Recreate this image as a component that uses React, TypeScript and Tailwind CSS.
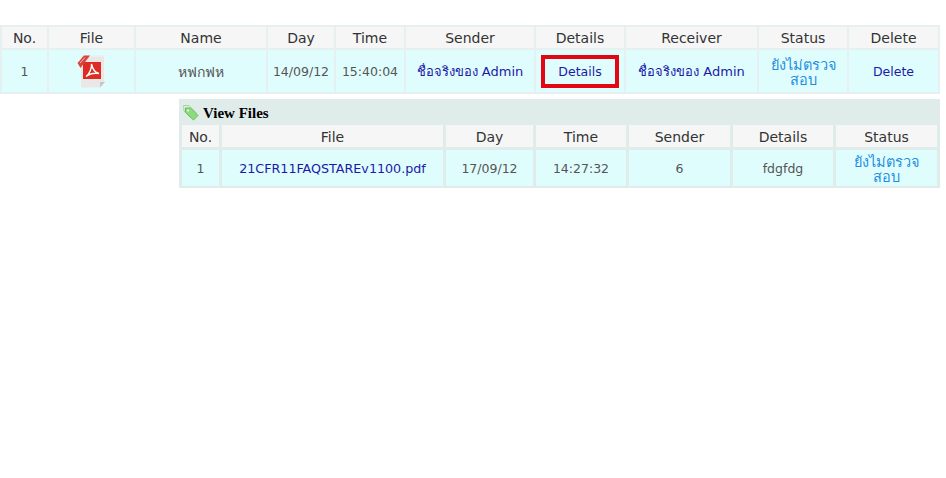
const Th = ({ c, className = "h-[21px] pt-[1px] leading-[20px]" }: { c: string; className?: string }) => (
  <th className={`bg-[#f6f6f6] px-0 pb-0 text-center font-normal text-[14px] text-[#333333] ${className}`}>{c}</th>
);
const Td = ({ children, className = "pt-[2px] text-[#555555] text-[12.500px]" }: { children?: React.ReactNode; className?: string }) => (
  <td className={`bg-[#e0fdfe] px-0 pb-0 text-center align-middle leading-[14px] ${className}`}>{children}</td>
);
const PdfIcon = () => (
  <svg width="30" height="33" viewBox="0 0 30 33" className="mx-auto block">
    <path d="M4 0.500 H28 V27 L23 32.500 H4 Z" fill="#eae7e7" />
    <path d="M28 27 L23 32.500 V27 Z" fill="#c8c4c4" />
    <path d="M4 0.500 H28 V27 H27 V1.500 H4 Z" fill="#f4f2f2" />
    <rect x="6" y="7" width="18" height="17" fill="#dc2c24" />
    <path d="M9 21.500 C12.500 19 15 13 14.500 9 C15.500 14 18 17.500 22 18.500 C17.500 17.800 12.500 18.800 9 21.500 Z" fill="none" stroke="#ffffff" strokeWidth="1.400" />
    <path d="M0.500 8 L7 0.500 L13 0.500 L3.500 13 Z" fill="#d9453e" />
    <path d="M3 8 L8 2.500" stroke="#f5bdb8" strokeWidth="1" />
  </svg>
);
const TagIcon = () => (
  <svg width="16" height="16" viewBox="0 0 16 16" className="shrink-0">
    <path d="M0.500 0.500 H6 L13.500 8 L8.500 13 L1 6 Z" fill="#dcefd6" stroke="#a9d3a4" strokeWidth="1" />
    <path d="M2.500 3 H7.500 L15 10.500 L10.500 15 L2.500 7.500 Z" fill="#8edb7c" stroke="#6cbb5f" strokeWidth="1" />
    <circle cx="5" cy="5.500" r="1" fill="#ffffff" />
  </svg>
);
const link = "pt-[2px] text-[#1a1aa8] text-[12.500px]";
const thai = "pt-[2px] text-[#1a1aa8] text-[13px]";
const status = "pt-[4px] text-[#1e8fe0] text-[14.500px] leading-[15px]";

export default function App() {
  return (
    <div className="w-[946px] h-[478px] bg-white overflow-hidden pt-[25px]" style={{ fontFamily: '"DejaVu Sans", Tahoma, "Noto Sans", sans-serif' }}>
      <table className="w-[940px] table-fixed border-separate border-spacing-[2px] bg-[#e6f0f0]">
        <colgroup>
          {[45, 85, 130, 66, 68, 128, 88, 131, 88, 89].map((w, i) => <col key={i} style={{ width: w }} />)}
        </colgroup>
        <thead>
          <tr>{["No.", "File", "Name", "Day", "Time", "Sender", "Details", "Receiver", "Status", "Delete"].map(c => <Th key={c} c={c} />)}</tr>
        </thead>
        <tbody>
          <tr className="h-[42px]">
            <Td>1</Td>
            <Td className="pt-0"><PdfIcon /></Td>
            <Td className="pt-[2px] text-[#555555] text-[14px]">หฟกฟห</Td>
            <Td>14/09/12</Td>
            <Td>15:40:04</Td>
            <Td className={thai}>ชื่อจริงของ Admin</Td>
            <Td className="pt-0 text-[#1a1aa8] text-[12.500px]">
              <div className="mx-auto flex h-[33px] w-[78px] items-center justify-center border-[4px] border-[#e30613] pt-[2px]">Details</div>
            </Td>
            <Td className={thai}>ชื่อจริงของ Admin</Td>
            <Td className={status}>ยังไม่ตรวจ<br />สอบ</Td>
            <Td className={link}>Delete</Td>
          </tr>
        </tbody>
      </table>
      <div className="ml-[179px] mt-[5px] h-[89px] w-[761px] overflow-hidden bg-[#e0ecea]">
        <div className="flex h-[23px] items-center gap-[4px] pl-[4px] pt-[5px] text-[15px] font-bold text-black" style={{ fontFamily: '"Liberation Serif", serif' }}>
          <TagIcon />View Files
        </div>
        <table className="w-[761px] table-fixed border-separate border-spacing-[3px]">
          <colgroup>
            {[37, 221, 87, 90, 101, 100, 101].map((w, i) => <col key={i} style={{ width: w }} />)}
          </colgroup>
          <thead>
            <tr>{["No.", "File", "Day", "Time", "Sender", "Details", "Status"].map(c => <Th key={c} c={c} className="h-[22px] pt-[2px] leading-[20px]" />)}</tr>
          </thead>
          <tbody>
            <tr className="h-[36px]">
              <Td>1</Td>
              <Td className="pt-[2px] text-[#1a1aa8] text-[12.700px]">21CFR11FAQSTAREv1100.pdf</Td>
              <Td>17/09/12</Td>
              <Td>14:27:32</Td>
              <Td>6</Td>
              <Td>fdgfdg</Td>
              <Td className={status}>ยังไม่ตรวจ<br />สอบ</Td>
            </tr>
          </tbody>
        </table>
      </div>
    </div>
  );
}
